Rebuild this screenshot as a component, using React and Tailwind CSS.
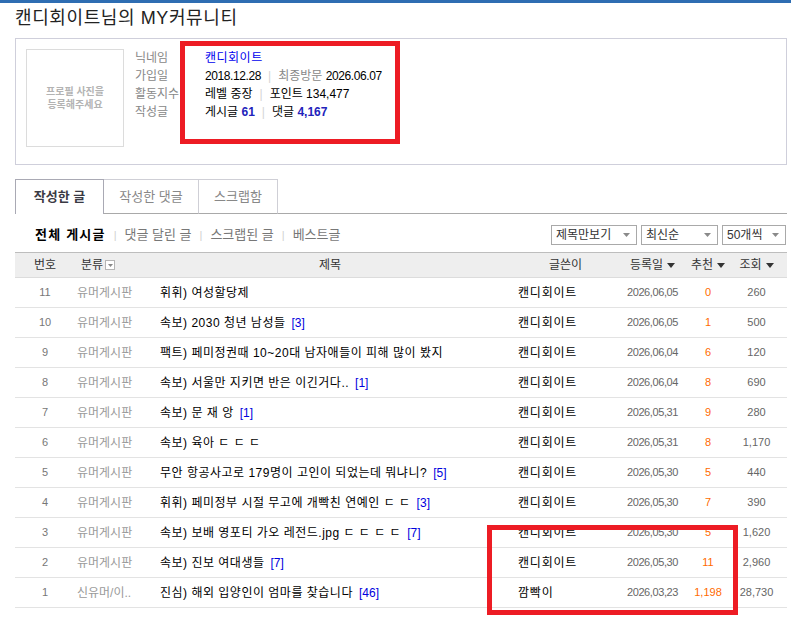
import React from 'react';

const posts = [
  { no: 11, cat: '유머게시판', title: '휘휘) 여성할당제', cmt: null, writer: '캔디회이트', date: '2026,06,05', rec: '0', views: '260' },
  { no: 10, cat: '유머게시판', title: '속보) 2030 청년 남성들', cmt: 3, writer: '캔디회이트', date: '2026,06,05', rec: '1', views: '500' },
  { no: 9, cat: '유머게시판', title: '팩트) 페미정권때 10~20대 남자애들이 피해 많이 봤지', cmt: null, writer: '캔디회이트', date: '2026,06,04', rec: '6', views: '120' },
  { no: 8, cat: '유머게시판', title: '속보) 서울만 지키면 반은 이긴거다..', cmt: 1, writer: '캔디회이트', date: '2026,06,04', rec: '8', views: '690' },
  { no: 7, cat: '유머게시판', title: '속보) 문 재 앙', cmt: 1, writer: '캔디회이트', date: '2026,05,31', rec: '9', views: '280' },
  { no: 6, cat: '유머게시판', title: '속보) 육아 ㄷ ㄷ ㄷ', cmt: null, writer: '캔디회이트', date: '2026,05,31', rec: '8', views: '1,170' },
  { no: 5, cat: '유머게시판', title: '무안 항공사고로 179명이 고인이 되었는데 뭐냐니?', cmt: 5, writer: '캔디회이트', date: '2026,05,30', rec: '5', views: '440' },
  { no: 4, cat: '유머게시판', title: '휘휘) 페미정부 시절 무고에 개빡친 연예인 ㄷ ㄷ', cmt: 3, writer: '캔디회이트', date: '2026,05,30', rec: '7', views: '390' },
  { no: 3, cat: '유머게시판', title: '속보) 보배 영포티 가오 레전드.jpg ㄷ ㄷ ㄷ ㄷ', cmt: 7, writer: '캔디회이트', date: '2026,05,30', rec: '5', views: '1,620' },
  { no: 2, cat: '유머게시판', title: '속보) 진보 여대생들', cmt: 7, writer: '캔디회이트', date: '2026,05,30', rec: '11', views: '2,960' },
  { no: 1, cat: '신유머/이..', title: '진심) 해외 입양인이 엄마를 찾습니다', cmt: 46, writer: '깜빡이', date: '2026,03,23', rec: '1,198', views: '28,730' },
];

const cols = 'grid grid-cols-[60px_75px_360px_105px_75px_36px_61px]';

const SortArrow = () => (
  <svg width="8" height="5" viewBox="0 0 8 5" className="ml-[4px] inline-block">
    <polygon points="0,0 8,0 4,5" fill="#333" />
  </svg>
);

const Sep = () => <span className="mx-[7px] text-[#d5d5d5]">|</span>;

const NavSep = () => <span className="mx-[8px] text-[11px] text-[#d0d0d0]">|</span>;

const Select = ({ label, width }) => (
  <div className={`flex h-[20px] items-center justify-between border border-[#a9a9a9] bg-white pl-[4px] pr-[6px] text-[12px] text-[#333] ${width}`}>
    <span>{label}</span>
    <svg width="7" height="4" viewBox="0 0 7 4">
      <polygon points="0,0 7,0 3.5,4" fill="#8a8a8a" />
    </svg>
  </div>
);

export default function App() {
  return (
    <div className="relative min-h-[618px] w-full bg-white font-['Liberation_Sans','Noto_Sans_CJK_KR',sans-serif] text-black">
      <div className="h-[3px] bg-[#2e6db2]" />

      {/* page title */}
      <h1 className="mt-[4px] pl-[15px] text-[18px] leading-[22px] tracking-[0.6px] text-[#222]">캔디회이트님의 MY커뮤니티</h1>

      {/* profile summary */}
      <div className="ml-[15px] mr-[4px] mt-[9px] flex h-[127px] border border-[#cfcfdb] pl-[10px] pt-[10px]">
        <div className="flex h-[98px] w-[98px] flex-col items-center justify-center border border-[#dcdcdc] text-[10px] font-bold leading-[13px] text-[#b3b3b3]">
          <span>프로필 사진을</span>
          <span>등록해주세요</span>
        </div>
        <div className="ml-[11px] w-[70px] text-[12px] leading-[18px] text-[#888]">
          <p>닉네임</p>
          <p>가입일</p>
          <p className="whitespace-nowrap">활동지수</p>
          <p>작성글</p>
        </div>
        <div className="text-[12px] leading-[18px]">
          <p className="tracking-[0.5px] text-[#0000ee]">캔디회이트</p>
          <p>
            <span className="tracking-[-0.4px]">2018.12.28</span>
            <Sep />
            <span className="text-[#888]">최종방문</span> <span className="tracking-[-0.4px]">2026.06.07</span>
          </p>
          <p>
            레벨 중장<Sep />포인트 134,477
          </p>
          <p>
            게시글 <b className="text-[#2222bb]">61</b>
            <Sep />
            댓글 <b className="text-[#2222bb]">4,167</b>
          </p>
        </div>
      </div>

      {/* tabs */}
      <div className="ml-[15px] mr-[4px] mt-[14px] flex h-[35px] text-[13px]">
        <div className="flex w-[89px] items-center justify-center border-l border-r border-t border-[#a9a9b4] font-bold text-[#3a3a44]">
          작성한 글
        </div>
        <div className="flex w-[95px] items-center justify-center border-b border-r border-t border-b-[#a9a9a9] border-r-[#cfcfd6] border-t-[#cfcfd6] text-[#888]">
          작성한 댓글
        </div>
        <div className="flex w-[79px] items-center justify-center border-b border-r border-t border-b-[#a9a9a9] border-r-[#cfcfd6] border-t-[#cfcfd6] text-[#888]">
          스크랩함
        </div>
        <div className="flex-1 border-b border-[#a9a9a9]" />
      </div>

      {/* filters */}
      <div className="ml-[15px] mr-[5px] mt-[11px] flex h-[20px] items-center justify-between pl-[20px]">
        <div className="flex items-center text-[13px] text-[#777]">
          <span className="font-bold tracking-[1.2px] text-black">전체 게시글</span>
          <NavSep />
          <span>댓글 달린 글</span>
          <NavSep />
          <span>스크랩된 글</span>
          <NavSep />
          <span>베스트글</span>
        </div>
        <div className="flex gap-[4px]">
          <Select label="제목만보기" width="w-[86px]" />
          <Select label="최신순" width="w-[77px]" />
          <Select label="50개씩" width="w-[64px]" />
        </div>
      </div>

      {/* post list */}
      <div className="ml-[15px] mr-[4px] mt-[7px]">
        <div className={`${cols} h-[26px] items-center border-b border-t border-b-[#dcdcdc] border-t-[#bdbdbd] bg-[#eeeeee] text-[12px] text-[#333]`}>
          <span className="text-center">번호</span>
          <span className="flex items-center pl-[6px]">
            분류
            <span className="ml-[2px] flex h-[10px] w-[10px] items-center justify-center border border-[#b5b5b5] bg-white">
              <svg width="5" height="3" viewBox="0 0 5 3">
                <polygon points="0,0 5,0 2.5,3" fill="#888" />
              </svg>
            </span>
          </span>
          <span className="text-center">제목</span>
          <span className="pl-[6px] text-center">글쓴이</span>
          <span className="flex items-center justify-center">등록일<SortArrow /></span>
          <span className="flex items-center justify-center">추천<SortArrow /></span>
          <span className="flex items-center justify-center">조회<SortArrow /></span>
        </div>

        {posts.map((p) => (
          <div key={p.no} className={`${cols} h-[30px] items-center border-b border-[#e3e3e3]`}>
            <span className="text-center text-[11px] text-[#777]">{p.no}</span>
            <span className="pl-[2px] text-[12px] text-[#9a9a9a]">{p.cat}</span>
            <span className="truncate pl-[10px] text-[12px] tracking-[0.5px]">
              {p.title}
              {p.cmt != null && <span className="ml-[6px] tracking-normal text-[#0000dd]">[{p.cmt}]</span>}
            </span>
            <span className="pl-[8px] text-[12px] tracking-[0.8px]">{p.writer}</span>
            <span className="text-center text-[11px] tracking-[-0.4px] text-[#666]">{p.date}</span>
            <span className="text-center text-[11px] text-[#ff6a00]">{p.rec}</span>
            <span className="text-center text-[11px] text-[#666]">{p.views}</span>
          </div>
        ))}
      </div>

      {/* highlight marks */}
      <div className="absolute left-[180px] top-[41px] h-[103px] w-[220px] border-[5px] border-[#ed1c24]" />
      <div className="absolute left-[487px] top-[525px] h-[90px] w-[251px] border-[5px] border-[#ed1c24]" />
    </div>
  );
}
